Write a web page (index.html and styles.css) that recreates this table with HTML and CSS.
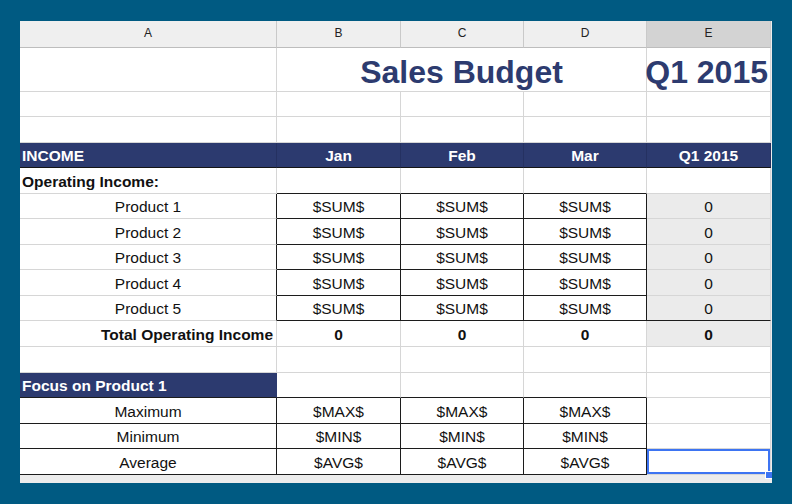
FILE: index.html
```html
<!DOCTYPE html>
<html lang="en">
<head>
<meta charset="utf-8">
<title>Sales Budget</title>
<link rel="stylesheet" href="styles.css">
</head>
<body>
<div class="sheet">
  <div class="grid">
    <!-- column headers -->
    <div class="ch">A</div>
    <div class="ch">B</div>
    <div class="ch">C</div>
    <div class="ch">D</div>
    <div class="ch sel">E</div>

    <!-- title row -->
    <div class="c"></div>
    <div class="c title span3">Sales Budget</div>
    <div class="c title tr">Q1 2015</div>

    <div class="c"></div><div class="c"></div><div class="c"></div><div class="c"></div><div class="c"></div>
    <div class="c"></div><div class="c"></div><div class="c"></div><div class="c"></div><div class="c"></div>

    <!-- income header -->
    <div class="c nv l">INCOME</div>
    <div class="c nv">Jan</div>
    <div class="c nv">Feb</div>
    <div class="c nv">Mar</div>
    <div class="c nv">Q1 2015</div>

    <div class="c b l">Operating Income:</div>
    <div class="c bb"></div><div class="c bb"></div><div class="c bb"></div>
    <div class="c"></div>

    <div class="c br">Product 1</div>
    <div class="c br bb">$SUM$</div><div class="c br bb">$SUM$</div><div class="c br bb">$SUM$</div>
    <div class="c q">0</div>

    <div class="c br">Product 2</div>
    <div class="c br bb">$SUM$</div><div class="c br bb">$SUM$</div><div class="c br bb">$SUM$</div>
    <div class="c q">0</div>

    <div class="c br">Product 3</div>
    <div class="c br bb">$SUM$</div><div class="c br bb">$SUM$</div><div class="c br bb">$SUM$</div>
    <div class="c q">0</div>

    <div class="c br">Product 4</div>
    <div class="c br bb">$SUM$</div><div class="c br bb">$SUM$</div><div class="c br bb">$SUM$</div>
    <div class="c q">0</div>

    <div class="c br">Product 5</div>
    <div class="c br bb">$SUM$</div><div class="c br bb">$SUM$</div><div class="c br bb">$SUM$</div>
    <div class="c q bb">0</div>

    <div class="c b r">Total Operating Income</div>
    <div class="c b">0</div><div class="c b">0</div><div class="c b">0</div>
    <div class="c b q">0</div>

    <div class="c"></div><div class="c"></div><div class="c"></div><div class="c"></div><div class="c"></div>

    <div class="c nv l bb focus">Focus on Product 1</div>
    <div class="c bb"></div><div class="c bb"></div><div class="c bb"></div>
    <div class="c"></div>

    <div class="c br bb">Maximum</div>
    <div class="c br bb">$MAX$</div><div class="c br bb">$MAX$</div><div class="c br bb">$MAX$</div>
    <div class="c"></div>

    <div class="c br bb">Minimum</div>
    <div class="c br bb">$MIN$</div><div class="c br bb">$MIN$</div><div class="c br bb">$MIN$</div>
    <div class="c"></div>

    <div class="c br bb">Average</div>
    <div class="c br bb">$AVG$</div><div class="c br bb">$AVG$</div><div class="c br bb">$AVG$</div>
    <div class="c active"></div>
  </div>
</div>
</body>
</html>
```

FILE: styles.css
```css
html, body {
  margin: 0;
  padding: 0;
}

body {
  background: #005a82;
  padding: 21px 20px;
  font-family: "Liberation Sans", Arial, sans-serif;
  color: #111;
}

.sheet {
  width: 752px;
  height: 462px;
  background: #ececec;
  overflow: hidden;
}

.grid {
  display: grid;
  width: 751px;
  grid-template-columns: 257px 124px 123px 123px 124px;
  grid-template-rows: 27px 44px 25px 26px 25px 26px 25px 26px 25px 26px 25px 26px 26px 25px 26px 25px 26px;
  background: #fff;
}

.ch {
  display: flex;
  align-items: center;
  justify-content: center;
  background: #efefef;
  border-right: 1px solid #c9c9c9;
  border-bottom: 1px solid #bdbdbd;
  font-size: 12px;
  color: #222;
  padding-bottom: 3px;
}

.ch.sel {
  background: #d3d3d3;
}

.c {
  display: flex;
  align-items: center;
  justify-content: center;
  border-right: 1px solid #d6d6d6;
  border-bottom: 1px solid #d6d6d6;
  padding-top: 2px;
  font-size: 15.5px;
  white-space: nowrap;
  min-width: 0;
}

.l {
  justify-content: flex-start;
  padding-left: 2px;
}

.r {
  justify-content: flex-end;
  padding-right: 3px;
}

.b {
  font-weight: bold;
}

.title {
  align-items: flex-end;
  padding-top: 0;
  padding-bottom: 3px;
  font-size: 32px;
  line-height: 32px;
  font-weight: bold;
  color: #2d3b6f;
}

.span3 {
  grid-column: span 3;
}

.title.tr {
  justify-content: flex-end;
  padding-right: 2px;
}

.nv {
  background: #2c3a6f;
  color: #fff;
  font-weight: bold;
  border-right-color: #253161;
  border-bottom-color: #151515;
}

.focus {
  border-right-color: #2c3a6f;
}

.bb {
  border-bottom-color: #1c1c1c;
}

.br {
  border-right-color: #1c1c1c;
}

.q {
  background: #ebebeb;
}

.active {
  position: relative;
}

.active::before {
  content: "";
  position: absolute;
  left: 0;
  top: 0;
  right: 0;
  bottom: 0;
  border: 2px solid #3d74f2;
}

.active::after {
  content: "";
  position: absolute;
  right: -2px;
  bottom: -4px;
  width: 6px;
  height: 6px;
  background: #3d74f2;
  border: 1px solid #fff;
  box-sizing: content-box;
  margin: -1px;
}
```
